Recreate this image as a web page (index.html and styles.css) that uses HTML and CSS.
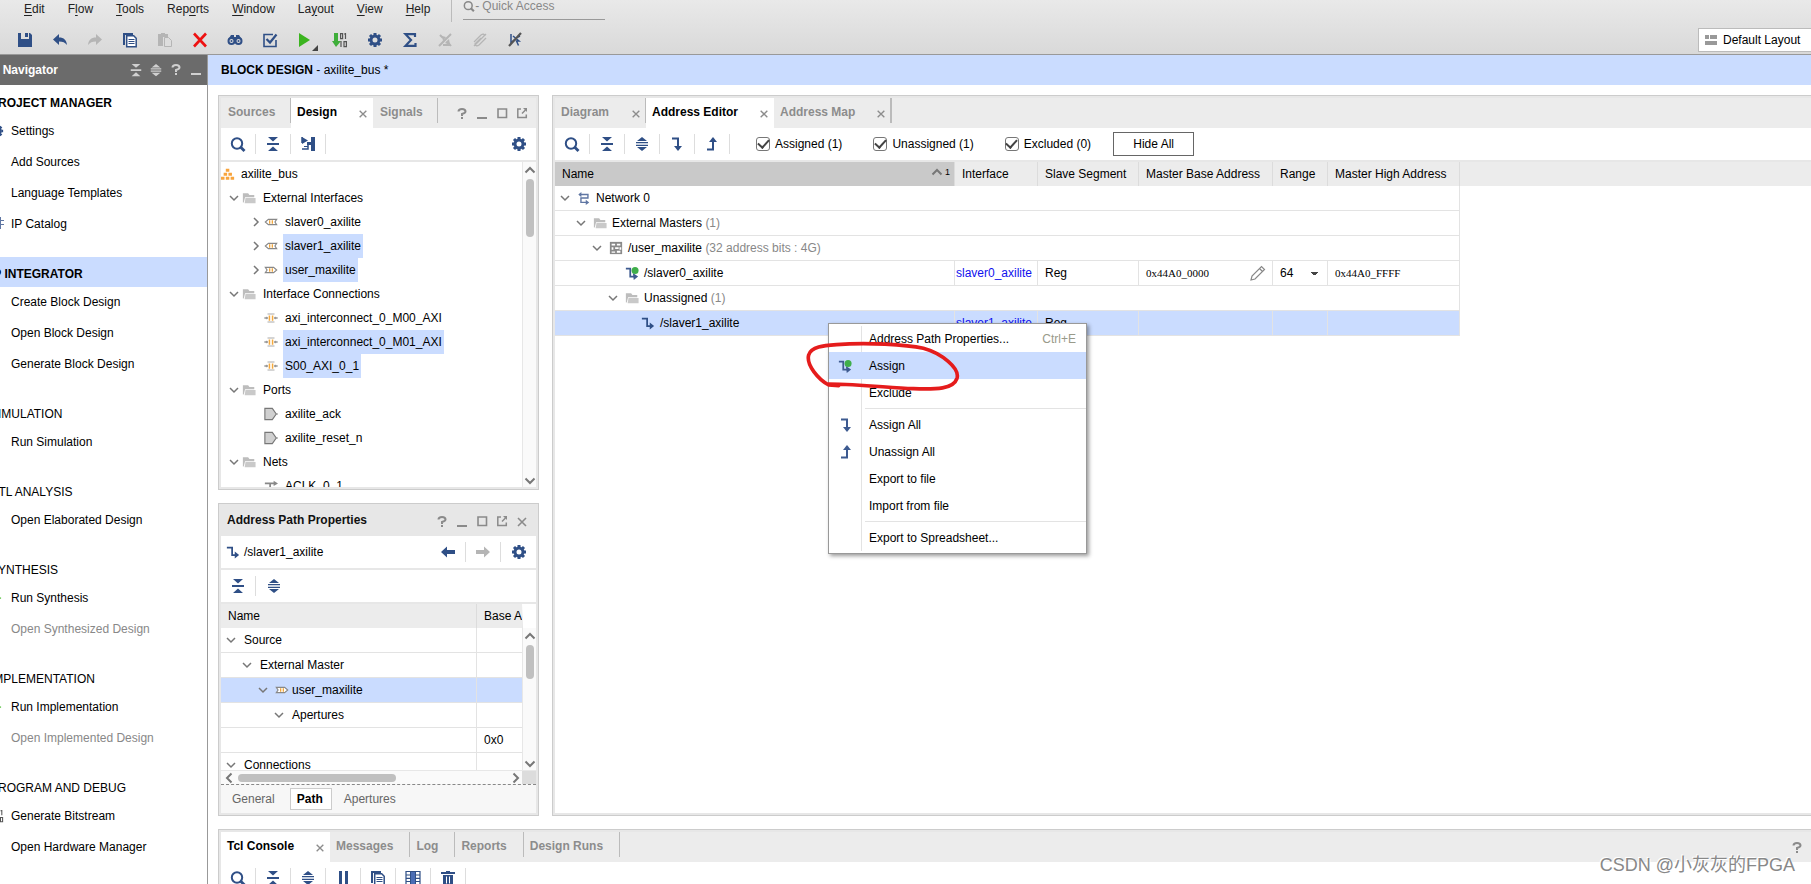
FILE: index.html
```html
<!DOCTYPE html>
<html lang="en">
<head>
<meta charset="utf-8">
<title>Block Design - axilite_bus</title>
<link rel="stylesheet" href="styles.css">
</head>
<body>
<svg class="sprite" aria-hidden="true">
  <symbol id="save" viewBox="0 0 16 16"><path fill="currentColor" d="M1 1h3v6h8V1h1l2 2v12H1zM8 1h3v4H8z"/></symbol>
  <symbol id="undo" viewBox="0 0 16 16"><path fill="currentColor" d="M7 2v3.500c5 0 7.500 2.500 8 7.500-2-2.500-4-3.500-8-3.500V13L1 7.500z"/></symbol>
  <symbol id="redo" viewBox="0 0 16 16"><path fill="currentColor" d="M9 2v3.500C4 5.500 1.500 8 1 13c2-2.500 4-3.500 8-3.500V13l6-5.500z"/></symbol>
  <symbol id="copy" viewBox="0 0 16 16"><path fill="currentColor" d="M1 1h10v2H3v10H1z"/><path fill="#fff" stroke="currentColor" stroke-width="1.500" d="M4.700 3.700h7l2.500 2.500v8.500H4.700z"/><path stroke="currentColor" d="M6.500 7.500h6M6.500 9.500h6M6.500 11.500h6"/></symbol>
  <symbol id="paste" viewBox="0 0 16 16"><path fill="currentColor" d="M1 2h3V1h4v1h3v3H6v9H1z"/><path fill="#ddd" stroke="currentColor" d="M7.500 5.500h4l3 3v6h-7z"/></symbol>
  <symbol id="cross" viewBox="0 0 16 16"><path fill="none" stroke="currentColor" stroke-width="2.600" d="M2 1.500l12 13M14 1.500l-12 13"/></symbol>
  <symbol id="binoc" viewBox="0 0 16 16"><path fill="currentColor" d="M4 3h3v2h2V3h3l2.500 4H1.500z"/><circle cx="4.500" cy="9" r="3" fill="#ddd" stroke="currentColor" stroke-width="2"/><circle cx="11.500" cy="9" r="3" fill="#ddd" stroke="currentColor" stroke-width="2"/><circle cx="4.500" cy="9" r="1" fill="currentColor"/><circle cx="11.500" cy="9" r="1" fill="currentColor"/></symbol>
  <symbol id="validate" viewBox="0 0 16 16"><path fill="none" stroke="currentColor" stroke-width="1.600" d="M11 2.500H2v12h12V8"/><path fill="none" stroke="currentColor" stroke-width="2.200" d="M4.500 7l3.500 3.500 6.500-8"/></symbol>
  <symbol id="play" viewBox="0 0 16 16"><path fill="currentColor" d="M2 1l11 7-11 7z"/></symbol>
  <symbol id="bits" viewBox="0 0 16 16"><path fill="#3fae3a" d="M2 1h4v8h3l-5 6-4-6h2z"/><g fill="none" stroke="#555" stroke-width="1.200"><path d="M8.600 1.600h2v5h-2zM13.500 1v6M12 2h1.500M9 9v6M12 9.600h2.400v5H12z"/></g></symbol>
  <symbol id="gear" viewBox="0 0 16 16"><g fill="none" stroke="currentColor"><circle cx="8" cy="8" r="4" stroke-width="3"/><path stroke-width="3" d="M8 1v2M8 13v2M1 8h2M13 8h2M3 3l1.500 1.500M11.500 11.500L13 13M13 3l-1.500 1.500M4.500 11.500L3 13"/></g></symbol>
  <symbol id="sigma" viewBox="0 0 16 16"><path fill="none" stroke="currentColor" stroke-width="2.200" d="M13 5V2.200H3.500L9 8l-5.500 5.800H13.500V11"/></symbol>
  <symbol id="nodrc" viewBox="0 0 16 16"><path fill="none" stroke="currentColor" stroke-width="2" d="M2 14L14 2M3 3l3 3M10 9l4 5M6 13h7"/><path fill="currentColor" d="M5 4l4 1-3 4zM12 7l1 6-5-2z"/></symbol>
  <symbol id="clip" viewBox="0 0 16 16"><path fill="none" stroke="currentColor" stroke-width="1.300" d="M2 14L14 2M2 10l7-7q3-2 4 1M14 6l-7 7q-3 2-4-1l6-6"/></symbol>
  <symbol id="nocursor" viewBox="0 0 16 16"><path fill="none" stroke="#2f4f86" stroke-width="1.500" d="M4 2v9l3-3M6 4l6 5H9.500l2 4.500M11 5l2-1"/><path stroke="#555" stroke-width="2.200" d="M2 14L14 1"/></symbol>
  <symbol id="collapse" viewBox="0 0 16 16"><path fill="currentColor" d="M3 1h10L8 5.500zM2 7h12v2H2zM3 15h10L8 10.500z"/></symbol>
  <symbol id="expand" viewBox="0 0 16 16"><path fill="currentColor" d="M3 5L8 1l5 4zM2 6h12v1.300H2zM2 8.700h12V10H2zM3 11l5 4 5-4z"/></symbol>
  <symbol id="search" viewBox="0 0 16 16"><circle cx="7" cy="7.500" r="5.200" fill="none" stroke="currentColor" stroke-width="2"/><path stroke="currentColor" stroke-width="2.800" d="M10.500 11l4 4"/></symbol>
  <symbol id="hier" viewBox="0 0 16 16"><path fill="none" stroke="currentColor" stroke-width="1.500" d="M2 1v6M2 13h6V7h4"/><path fill="currentColor" d="M2 1l6 3.500L2 8zM11 1h4v14h-4V9H7V6h4z"/><path stroke="currentColor" d="M4 10.500h4"/></symbol>
  <symbol id="down" viewBox="0 0 16 16"><path fill="none" stroke="currentColor" stroke-width="2" d="M3 2.500h6V11"/><path fill="currentColor" d="M5 10h8l-4 5z"/></symbol>
  <symbol id="up" viewBox="0 0 16 16"><path fill="none" stroke="currentColor" stroke-width="2" d="M3 13.500h6V5"/><path fill="currentColor" d="M5 6h8L9 1z"/></symbol>
  <symbol id="link" viewBox="0 0 16 16"><path fill="none" stroke="currentColor" stroke-width="2" d="M1 3h6v8.500h5"/><path fill="currentColor" d="M10 7.500l5 4-5 4z"/></symbol>
  <symbol id="linked" viewBox="0 0 16 16"><path fill="none" stroke="#3d5a90" stroke-width="2" d="M1 3h5v9h5"/><path fill="#3d5a90" d="M9 8l6 4-5 4z"/><circle cx="11.500" cy="5" r="4" fill="#3fae4a"/></symbol>
  <symbol id="net" viewBox="0 0 16 16"><path fill="none" stroke="#5f76a3" stroke-width="1.600" d="M3 4h9.500v4H4.500v5H11"/><path fill="#5f76a3" d="M5 1v6L1.500 4zM10 10v6l4-3z"/></symbol>
  <symbol id="grid" viewBox="0 0 16 16"><path fill="#8a8a8a" d="M1 1h14v14H1z"/><path fill="#fff" d="M3 3h4v2H3zM9 3h4v2H9zM3 7h2v3H3zM7 7h4v2H7zM12 7h2v3h-2zM3 12h4v1.500H3zM9 11h4v2.500H9z"/></symbol>
  <symbol id="folder" viewBox="0 0 16 16"><path fill="#bdbdbd" d="M1 2.500h6l1.500 2H14V7H3.500L2 13H1z"/><path fill="#c9c9c9" d="M4 8h11.500v6H3z"/></symbol>
  <symbol id="chev" viewBox="0 0 12 12"><path fill="none" stroke="#777" stroke-width="1.500" d="M2 4l4 4 4-4"/></symbol>
  <symbol id="chevr" viewBox="0 0 12 12"><path fill="none" stroke="#777" stroke-width="1.500" d="M4 2l4 4-4 4"/></symbol>
  <symbol id="root" viewBox="0 0 16 16"><path fill="#f8a43c" d="M5.500 2h4v3.500h-4zM3 6.500h4V10H3zM8.500 6.500h4V10h-4zM0 11h4v3.500H0zM5.500 11h4v3.500h-4zM11 11h4v3.500h-4z"/></symbol>
  <symbol id="slave" viewBox="0 0 16 16"><path fill="#fff" stroke="#888" stroke-width="1.300" d="M5 5h9.500l-2 3 2 3H5L1.500 8z"/><path stroke="#f0a030" stroke-width="1.400" d="M6.500 6v4M9.500 6v4"/></symbol>
  <symbol id="master" viewBox="0 0 16 16"><path fill="#fff" stroke="#888" stroke-width="1.300" d="M11 5H1.500l2 3-2 3H11l3.500-3z"/><path stroke="#f0a030" stroke-width="1.400" d="M6.500 6v4M9.500 6v4"/></symbol>
  <symbol id="conn" viewBox="0 0 16 16"><path stroke="#f5a93c" stroke-width="1.700" d="M6.200 5v6M9.800 5v6"/><path stroke="#aaa" stroke-width="1.200" d="M4 3.500h8M4 12.500h8"/><path stroke="#999" stroke-width="1.300" d="M0 8h4M12 8h4"/><circle cx="3" cy="8" r="1.500" fill="#999"/><circle cx="13" cy="8" r="1.500" fill="#999"/></symbol>
  <symbol id="port" viewBox="0 0 16 16"><path fill="#d0d0d0" stroke="#777" stroke-width="1.300" d="M1 1.500h8.500L14 8l-4.500 6.500H1z"/><path stroke="#777" d="M14 8h2"/></symbol>
  <symbol id="wire" viewBox="0 0 16 16"><path fill="none" stroke="#888" stroke-width="2" d="M1 5h11M7 5v10"/><path fill="#888" d="M11 2l5 3-5 3z"/></symbol>
  <symbol id="left" viewBox="0 0 16 16"><path fill="currentColor" d="M7 2.500v3.500h8v4H7v3.500L1 8z"/></symbol>
  <symbol id="right" viewBox="0 0 16 16"><path fill="currentColor" d="M9 2.500v3.500H1v4h8v3.500L15 8z"/></symbol>
  <symbol id="help" viewBox="0 0 12 12"><path fill="none" stroke="currentColor" stroke-width="2" d="M2.500 3.500q0-2.500 3.500-2.500t3.500 2.500Q9.500 5 6 6V8"/><path fill="currentColor" d="M5 9h2v2H5z"/></symbol>
  <symbol id="min" viewBox="0 0 12 12"><path fill="currentColor" d="M1 9h10v2H1z"/></symbol>
  <symbol id="max" viewBox="0 0 12 12"><path fill="none" stroke="currentColor" stroke-width="1.600" d="M2 1h8.500v8.500H2z"/></symbol>
  <symbol id="pop" viewBox="0 0 12 12"><path fill="none" stroke="currentColor" stroke-width="1.500" d="M5 1H1.800v8.500h8.500V6.500M6 5.500L9.500 2"/><path fill="currentColor" d="M7 0h4v4z"/></symbol>
  <symbol id="x" viewBox="0 0 12 12"><path fill="none" stroke="currentColor" stroke-width="1.600" d="M2 2l8 8M10 2l-8 8"/></symbol>
  <symbol id="pencil" viewBox="0 0 16 16"><path fill="none" stroke="#888" stroke-width="1.200" d="M1 15l1-4L11.500 1.500l3 3L5 14zM9.500 3.500l3 3"/></symbol>
  <symbol id="layout" viewBox="0 0 12 12"><path fill="#999" d="M0 1h4v4H0zM5 1h7v4H5zM0 7h12v4H0z"/></symbol>
  <symbol id="pause" viewBox="0 0 16 16"><path fill="currentColor" d="M4 1h3v15H4zM10 1h3v15h-3z"/></symbol>
  <symbol id="table" viewBox="0 0 16 16"><path fill="none" stroke="currentColor" stroke-width="1.200" d="M1 1.500h14v13H1zM1 5h14M1 8.300h14M1 11.500h14"/><path fill="#4a6db5" stroke="currentColor" d="M5.500 1.500h5v13h-5z"/></symbol>
  <symbol id="trash" viewBox="0 0 16 16"><path fill="currentColor" d="M6 1h4v1h5v2H1V2h5zM3 5h10v10.500H3z"/><path stroke="#fff" d="M6.500 6.500v7M9.500 6.500v7"/></symbol>
</svg>

<header class="top">
  <nav class="menubar" aria-label="Main menu">
    <button><u>E</u>dit</button><button>F<u>l</u>ow</button><button><u>T</u>ools</button><button>Rep<u>o</u>rts</button><button><u>W</u>indow</button><button>La<u>y</u>out</button><button><u>V</u>iew</button><button><u>H</u>elp</button>
    <label class="quick"><svg class="i12"><use href="#search"/></svg><span class="dash">-</span><input type="text" placeholder="Quick Access" aria-label="Quick Access"></label>
  </nav>
  <div class="toolbar main-tools">
    <button aria-label="Save"><svg><use href="#save"/></svg></button>
    <button aria-label="Undo"><svg><use href="#undo"/></svg></button>
    <button aria-label="Redo" disabled><svg><use href="#redo"/></svg></button>
    <button aria-label="Copy"><svg><use href="#copy"/></svg></button>
    <button aria-label="Paste" disabled><svg><use href="#paste"/></svg></button>
    <button class="red" aria-label="Delete"><svg><use href="#cross"/></svg></button>
    <button aria-label="Find"><svg><use href="#binoc"/></svg></button>
    <button aria-label="Validate"><svg><use href="#validate"/></svg></button>
    <button class="green more" aria-label="Run"><svg><use href="#play"/></svg></button>
    <button aria-label="Bitstream"><svg><use href="#bits"/></svg></button>
    <button aria-label="Settings"><svg><use href="#gear"/></svg></button>
    <button aria-label="Summary"><svg><use href="#sigma"/></svg></button>
    <button aria-label="Rules" disabled><svg><use href="#nodrc"/></svg></button>
    <button aria-label="Attach" disabled><svg><use href="#clip"/></svg></button>
    <button aria-label="Cancel selection"><svg><use href="#nocursor"/></svg></button>
    <button class="layout-btn"><svg class="i12"><use href="#layout"/></svg>Default Layout</button>
  </div>
</header>

<div class="body">
  <aside class="flow">
    <div class="flow-title"><h2>Flow Navigator</h2>
      <button aria-label="Collapse"><svg class="i14"><use href="#collapse"/></svg></button><button aria-label="Expand"><svg class="i14"><use href="#expand"/></svg></button><button aria-label="Help"><svg class="i12"><use href="#help"/></svg></button><button aria-label="Minimize"><svg class="i12"><use href="#min"/></svg></button>
    </div>
    <nav class="flow-list">
      <section><h3 class="b">PROJECT MANAGER</h3>
        <button><svg class="i14 blue"><use href="#gear"/></svg>Settings</button>
        <button><i class="i14"></i>Add Sources</button>
        <button><i class="i14"></i>Language Templates</button>
        <button><svg class="i14" viewBox="0 0 14 14"><path stroke="#5f76a3" d="M2 3.500h12M2 7.500h12M6.500 0v12M10.500 0v12"/></svg>IP Catalog</button></section>
      <section><h3 class="b on">IP INTEGRATOR</h3>
        <button><i class="i14"></i>Create Block Design</button>
        <button><i class="i14"></i>Open Block Design</button>
        <button><i class="i14"></i>Generate Block Design</button></section>
      <section><h3>SIMULATION</h3>
        <button><i class="i14"></i>Run Simulation</button></section>
      <section><h3>RTL ANALYSIS</h3>
        <button><i class="i14"></i>Open Elaborated Design</button></section>
      <section><h3>SYNTHESIS</h3>
        <button><svg class="i14 green"><use href="#play"/></svg>Run Synthesis</button>
        <button disabled><i class="i14"></i>Open Synthesized Design</button></section>
      <section><h3>IMPLEMENTATION</h3>
        <button><svg class="i14 green"><use href="#play"/></svg>Run Implementation</button>
        <button disabled><i class="i14"></i>Open Implemented Design</button></section>
      <section><h3>PROGRAM AND DEBUG</h3>
        <button><svg class="i14"><use href="#bits"/></svg>Generate Bitstream</button>
        <button><i class="i14"></i>Open Hardware Manager</button></section>
    </nav>
  </aside>

  <main class="work">
    <h1 class="work-title"><b>BLOCK DESIGN</b> - axilite_bus *</h1>
    <div class="upper">
      <div class="side">
        <section class="panel design">
          <div class="tabs">
            <button class="tab t-src">Sources</button>
            <div class="tab on t-des"><button>Design</button><button class="close" aria-label="Close"><svg class="i10"><use href="#x"/></svg></button></div>
            <button class="tab t-sig">Signals</button>
            <div class="win"><button aria-label="Help"><svg class="i12"><use href="#help"/></svg></button><button aria-label="Minimize"><svg class="i12"><use href="#min"/></svg></button><button aria-label="Maximize"><svg class="i12"><use href="#max"/></svg></button><button aria-label="Float"><svg class="i12"><use href="#pop"/></svg></button></div>
          </div>
          <div class="toolbar sub">
            <button aria-label="Search"><svg><use href="#search"/></svg></button><button aria-label="Collapse"><svg><use href="#collapse"/></svg></button><button aria-label="Hierarchy"><svg><use href="#hier"/></svg></button>
            <button class="end" aria-label="Settings"><svg><use href="#gear"/></svg></button>
          </div>
          <div class="scroller">
            <ul class="tree">
              <li class="l0"><svg class="i14"><use href="#root"/></svg><span>axilite_bus</span></li>
              <li class="l1"><svg class="i12"><use href="#chev"/></svg><svg class="i14"><use href="#folder"/></svg><span>External Interfaces</span></li>
              <li class="l2"><svg class="i12"><use href="#chevr"/></svg><svg class="i14"><use href="#slave"/></svg><span>slaver0_axilite</span></li>
              <li class="l2"><svg class="i12"><use href="#chevr"/></svg><svg class="i14"><use href="#slave"/></svg><span class="sel">slaver1_axilite</span></li>
              <li class="l2"><svg class="i12"><use href="#chevr"/></svg><svg class="i14"><use href="#master"/></svg><span class="sel">user_maxilite</span></li>
              <li class="l1"><svg class="i12"><use href="#chev"/></svg><svg class="i14"><use href="#folder"/></svg><span>Interface Connections</span></li>
              <li class="l2"><i class="i12"></i><svg class="i14"><use href="#conn"/></svg><span>axi_interconnect_0_M00_AXI</span></li>
              <li class="l2"><i class="i12"></i><svg class="i14"><use href="#conn"/></svg><span class="sel">axi_interconnect_0_M01_AXI</span></li>
              <li class="l2"><i class="i12"></i><svg class="i14"><use href="#conn"/></svg><span class="sel">S00_AXI_0_1</span></li>
              <li class="l1"><svg class="i12"><use href="#chev"/></svg><svg class="i14"><use href="#folder"/></svg><span>Ports</span></li>
              <li class="l2"><i class="i12"></i><svg class="i14"><use href="#port"/></svg><span>axilite_ack</span></li>
              <li class="l2"><i class="i12"></i><svg class="i14"><use href="#port"/></svg><span>axilite_reset_n</span></li>
              <li class="l1"><svg class="i12"><use href="#chev"/></svg><svg class="i14"><use href="#folder"/></svg><span>Nets</span></li>
              <li class="l2"><i class="i12"></i><svg class="i14"><use href="#wire"/></svg><span>ACLK_0_1</span></li>
            </ul>
            <div class="vbar"><svg class="i12" viewBox="0 0 12 12"><path d="M1.500 8.500L6 4l4.500 4.500"/></svg><div class="thumb tall"></div><svg class="i12 last" viewBox="0 0 12 12"><path d="M1.500 3.500L6 8l4.500-4.500"/></svg></div>
          </div>
        </section>

        <section class="panel props">
          <div class="tabs plain"><h2>Address Path Properties</h2>
            <div class="win"><button aria-label="Help"><svg class="i12"><use href="#help"/></svg></button><button aria-label="Minimize"><svg class="i12"><use href="#min"/></svg></button><button aria-label="Maximize"><svg class="i12"><use href="#max"/></svg></button><button aria-label="Float"><svg class="i12"><use href="#pop"/></svg></button><button aria-label="Close"><svg class="i12"><use href="#x"/></svg></button></div>
          </div>
          <div class="toolbar sub path"><svg class="i14 blue"><use href="#link"/></svg><span>/slaver1_axilite</span>
            <button class="end" aria-label="Back"><svg><use href="#left"/></svg></button><button aria-label="Forward" disabled><svg><use href="#right"/></svg></button><button class="nosep" aria-label="Settings"><svg><use href="#gear"/></svg></button>
          </div>
          <div class="toolbar sub"><button aria-label="Collapse"><svg><use href="#collapse"/></svg></button><button class="nosep" aria-label="Expand"><svg><use href="#expand"/></svg></button></div>
          <div class="scroller props-scroll">
            <table class="grid pgrid">
              <thead><tr><th class="c-pname">Name</th><th>Base A</th></tr></thead>
              <tbody>
                <tr><td><div class="cell"><svg class="i12"><use href="#chev"/></svg><span>Source</span></div></td><td></td></tr>
                <tr><td><div class="cell d1"><svg class="i12"><use href="#chev"/></svg><span>External Master</span></div></td><td></td></tr>
                <tr class="hot"><td><div class="cell d2"><svg class="i12"><use href="#chev"/></svg><svg class="i14"><use href="#master"/></svg><span>user_maxilite</span></div></td><td></td></tr>
                <tr><td><div class="cell d3"><svg class="i12"><use href="#chev"/></svg><span>Apertures</span></div></td><td></td></tr>
                <tr><td></td><td>0x0</td></tr>
                <tr><td><div class="cell"><svg class="i12"><use href="#chev"/></svg><span>Connections</span></div></td><td></td></tr>
              </tbody>
            </table>
            <div class="vbar"><svg class="i12" viewBox="0 0 12 12"><path d="M1.500 8.500L6 4l4.500 4.500"/></svg><div class="thumb"></div><svg class="i12 last" viewBox="0 0 12 12"><path d="M1.500 3.500L6 8l4.500-4.500"/></svg></div>
          </div>
          <div class="hbar"><svg class="i12" viewBox="0 0 12 12"><path d="M8.500 1.500L4 6l4.500 4.500"/></svg><div class="hthumb"></div><svg class="i12 last" viewBox="0 0 12 12"><path d="M3.500 1.500L8 6l-4.500 4.500"/></svg><i class="corner"></i></div>
          <div class="bottom-tabs"><button>General</button><button class="on">Path</button><button>Apertures</button></div>
        </section>
      </div>

      <section class="panel editor">
        <div class="tabs">
          <div class="tab t-dia"><button>Diagram</button><button class="close" aria-label="Close"><svg class="i10"><use href="#x"/></svg></button></div>
          <div class="tab on t-edit"><button>Address Editor</button><button class="close" aria-label="Close"><svg class="i10"><use href="#x"/></svg></button></div>
          <div class="tab t-map"><button>Address Map</button><button class="close" aria-label="Close"><svg class="i10"><use href="#x"/></svg></button></div>
        </div>
        <div class="toolbar sub">
          <button aria-label="Search"><svg><use href="#search"/></svg></button><button aria-label="Collapse"><svg><use href="#collapse"/></svg></button><button aria-label="Expand"><svg><use href="#expand"/></svg></button><button aria-label="Assign all"><svg><use href="#down"/></svg></button><button aria-label="Unassign all"><svg><use href="#up"/></svg></button>
          <div class="filters"><label><input type="checkbox" checked>Assigned (1)</label><label><input type="checkbox" checked>Unassigned (1)</label><label><input type="checkbox" checked>Excluded (0)</label><button class="hide">Hide All</button></div>
        </div>
        <table class="grid agrid">
          <thead><tr><th class="c-name"><div class="sorted">Name<svg class="i12" viewBox="0 0 12 12"><path d="M1.500 8.500L6 4l4.500 4.500"/></svg><small>1</small></div></th><th class="c-if">Interface</th><th class="c-seg">Slave Segment</th><th class="c-base">Master Base Address</th><th class="c-range">Range</th><th class="c-high">Master High Address</th><th class="fill"></th></tr></thead>
          <tbody>
            <tr><td colspan="6"><div class="cell"><svg class="i12"><use href="#chev"/></svg><svg class="i14"><use href="#net"/></svg><span>Network 0</span></div></td><td class="fill"></td></tr>
            <tr><td colspan="6"><div class="cell d1"><svg class="i12"><use href="#chev"/></svg><svg class="i14"><use href="#folder"/></svg><span>External Masters <em>(1)</em></span></div></td><td class="fill"></td></tr>
            <tr><td colspan="6"><div class="cell d2"><svg class="i12"><use href="#chev"/></svg><svg class="i14"><use href="#grid"/></svg><span>/user_maxilite <em>(32 address bits : 4G)</em></span></div></td><td class="fill"></td></tr>
            <tr><td><div class="cell d3"><i class="i12"></i><svg class="i14"><use href="#linked"/></svg><span>/slaver0_axilite</span></div></td><td class="lnk"><a href="#if0">slaver0_axilite</a></td><td>Reg</td><td><div class="hexcell"><span class="hex">0x44A0_0000</span><button aria-label="Edit"><svg><use href="#pencil"/></svg></button></div></td><td><select aria-label="Range"><option>64</option></select></td><td><span class="hex">0x44A0_FFFF</span></td><td class="fill"></td></tr>
            <tr><td colspan="6"><div class="cell d3"><svg class="i12"><use href="#chev"/></svg><svg class="i14"><use href="#folder"/></svg><span>Unassigned <em>(1)</em></span></div></td><td class="fill"></td></tr>
            <tr class="hot"><td><div class="cell d4"><i class="i12"></i><svg class="i14 blue"><use href="#link"/></svg><span>/slaver1_axilite</span></div></td><td class="lnk"><a href="#if1">slaver1_axilite</a></td><td>Reg</td><td></td><td></td><td></td><td class="fill"></td></tr>
          </tbody>
        </table>
      </section>
    </div>

    <section class="panel console">
      <div class="tabs">
        <div class="tab on t-tcl"><button>Tcl Console</button><button class="close" aria-label="Close"><svg class="i10"><use href="#x"/></svg></button></div>
        <button class="tab bar">Messages</button><button class="tab bar">Log</button><button class="tab bar">Reports</button><button class="tab bar">Design Runs</button>
        <div class="win"><button aria-label="Help"><svg class="i12"><use href="#help"/></svg></button></div>
      </div>
      <div class="toolbar sub"><button aria-label="Search"><svg><use href="#search"/></svg></button><button aria-label="Collapse"><svg><use href="#collapse"/></svg></button><button aria-label="Expand"><svg><use href="#expand"/></svg></button><button aria-label="Pause"><svg><use href="#pause"/></svg></button><button aria-label="Copy"><svg><use href="#copy"/></svg></button><button aria-label="Columns"><svg><use href="#table"/></svg></button><button aria-label="Clear"><svg><use href="#trash"/></svg></button></div>
    </section>

    <div class="context" role="menu">
      <button role="menuitem"><i></i><span>Address Path Properties...</span><kbd>Ctrl+E</kbd></button>
      <button role="menuitem" class="hot"><i><svg class="i14"><use href="#linked"/></svg></i><span>Assign</span></button>
      <button role="menuitem"><i></i><span>Exclude</span></button>
      <hr>
      <button role="menuitem"><i><svg><use href="#down"/></svg></i><span>Assign All</span></button>
      <button role="menuitem"><i><svg><use href="#up"/></svg></i><span>Unassign All</span></button>
      <button role="menuitem"><i></i><span>Export to file</span></button>
      <button role="menuitem"><i></i><span>Import from file</span></button>
      <hr>
      <button role="menuitem"><i></i><span>Export to Spreadsheet...</span></button>
    </div>
    <svg class="scribble" viewBox="0 0 480 252" aria-hidden="true"><path d="M116 227L86 225C55 208 18 165 26 135C34 110 70 107 110 104C200 96 320 104 370 115C425 130 480 175 471 205C460 238 410 238 340 236C270 234 190 223 86 222"/></svg>
    <p class="mark">CSDN @小灰灰的FPGA</p>
  </main>
</div>
</body>
</html>
```
FILE: styles.css
```css
* { box-sizing: border-box; }
body {
  margin: 0;
  height: 100vh;
  overflow: hidden;
  display: flex;
  flex-direction: column;
  font: 12px/16px "Liberation Sans", Arial, sans-serif;
  color: #000;
  background: #fff;
}
h1, h2, h3, p, ul { margin: 0; padding: 0; font-size: 12px; font-weight: normal; }
button, input, select { font: inherit; color: inherit; border: 0; background: none; padding: 0; margin: 0; }
button { white-space: nowrap; }
svg { width: 16px; height: 16px; display: block; flex: none; }
i { flex: none; }
.sprite { position: absolute; width: 0; height: 0; }
.i10 { width: 10px; height: 10px; }
.i12 { width: 12px; height: 12px; }
.i14 { width: 14px; height: 14px; }
.blue { color: #2f4f86; }
.green, .toolbar .green { color: #3bb41f; }
.toolbar .red { color: #ee1111; }

/* top bars */
.top { flex: none; background: linear-gradient(#e9e9e9, #d9d9d9); border-bottom: 1px solid #999; }
.menubar { display: flex; gap: 1px; height: 26px; padding-left: 13px; color: #222; }
.menubar > button { padding: 0 11px; height: 17px; }
.menubar u { text-underline-offset: 2px; }
.quick { display: flex; align-items: center; height: 20px; width: 142px; margin-left: 21px; padding-bottom: 7px; border-bottom: 1px solid #999; color: #888; position: relative; }
.quick::before { content: ""; position: absolute; left: -12px; top: 0; width: 1px; height: 22px; background: #bbb; }
.quick input { width: 100%; min-width: 0; outline: 0; }
.quick input::placeholder { color: #888; opacity: 1; }
.dash { padding-right: 3px; }
.toolbar { display: flex; align-items: center; color: #2f4f86; }
.toolbar button { width: 35px; flex: none; display: flex; justify-content: center; align-items: center; }
.toolbar button:disabled { color: #b5b5b5; }
.main-tools { height: 28px; padding-left: 7px; }
.more { position: relative; }
.more::after { content: ""; position: absolute; right: 4px; bottom: -3px; border: 3px solid; border-color: transparent #444 #444 transparent; }
.toolbar .layout-btn { margin-left: auto; width: 113px; height: 24px; gap: 6px; justify-content: flex-start; padding-left: 6px; color: #000; background: #fff; border: 1px solid #bbb; border-right: 0; }

.body { flex: 1; display: flex; min-height: 0; }

/* flow navigator */
.flow { width: 208px; flex: none; border-right: 1px solid #999; overflow: hidden; }
.flow-title { display: flex; align-items: center; height: 30px; background: #6b6b6b; color: #d0d0d0; gap: 7px; padding-right: 5px; }
.flow-title h2 { font-weight: bold; color: #fff; margin: 0 auto 0 -28px; white-space: nowrap; }
.flow-title button { width: 13px; display: flex; justify-content: center; }
.flow-list { margin-left: -30px; padding-top: 1px; }
.flow-list section { padding-bottom: 17px; }
.flow-list h3 { height: 30px; padding: 9px 0 0 20px; }
.flow-list .b { font-weight: bold; }
.flow-list .on { background: #cadcff; }
.flow-list button { display: flex; align-items: center; gap: 7px; height: 31px; width: 100%; padding: 0 0 1px 20px; }
.flow-list button:disabled { color: #888; }

/* workspace */
.work { flex: 1; min-width: 0; display: flex; flex-direction: column; position: relative; }
.work-title { height: 30px; flex: none; padding: 7px 13px; background: #cadcff; }
.upper { flex: 1; min-height: 0; display: flex; gap: 13px; padding: 10px 0 13px 10px; }
.side { width: 321px; flex: none; display: flex; flex-direction: column; gap: 13px; min-height: 0; }
.panel { border: 1px solid #ccc; padding: 2px; background: #e7e7e7; display: flex; flex-direction: column; min-height: 0; }
.design { flex: 1; }
.props { flex: none; }
.editor { flex: 1; min-width: 0; background: #fff; border-right: 0; padding-right: 0; box-shadow: inset 2px 2px #e7e7e7, inset 0 -2px #e7e7e7; }
.editor .sub { margin-bottom: 0; height: 34px; border-bottom: 2px solid #e7e7e7; }
.console { flex: none; height: 55px; margin-left: 10px; overflow: hidden; border-right: 0; border-bottom: 0; padding-bottom: 0; padding-right: 0; }

.tabs { display: flex; height: 30px; flex: none; background: #ececec; color: #8c8c8c; font-weight: bold; }
.tabs.plain { background: #e7e7e7; }
.tabs h2 { font-weight: bold; color: #111; padding: 6px; }
.tab { display: flex; align-items: flex-start; justify-content: space-between; padding: 6px 7px 0; position: relative; height: 30px; }
.tab.on { background: #fff; color: #000; }
.close { padding-top: 5px; color: #8c8c8c; }
.t-src { width: 70px; }
.t-des { width: 82px; padding: 6px 5px 0 6px; }
.t-sig { width: 65px; }
.t-dia { width: 91px; padding: 6px 5px 0 6px; }
.t-edit { width: 128px; padding: 6px 5px 0 6px; }
.t-map { width: 118px; padding: 6px 6px 0 6px; }
.t-tcl { width: 109px; padding: 6px 5px 0 6px; }
.tab.bar { padding: 6px 17px 0 6px; }
.t-src::after, .t-sig::after, .t-dia::after, .t-map::after, .bar::after { content: ""; position: absolute; right: 0; top: 0; width: 1px; height: 25px; background: #bbb; }
.t-map::after { width: 2px; }
.win { display: flex; gap: 8px; margin-left: auto; padding: 10px 8px 0 0; color: #8a8a8a; align-items: flex-start; }

.sub { height: 32px; flex: none; background: #fff; margin-bottom: 2px; }
.sub > button { height: 20px; border-right: 1px solid #ddd; }
.sub > .end { margin-left: auto; border-right: 0; }
.sub > .nosep { border-right: 0; }
.path { padding-left: 5px; gap: 0; }
.path span { color: #000; padding-left: 4px; }
.path > .end { border-right: 1px solid #ddd; }

.scroller { display: flex; flex: 1; min-height: 0; background: #fff; overflow: hidden; }
.tree { list-style: none; flex: 1; }
.tree li { display: flex; align-items: center; height: 24px; }
.tree span { line-height: 24px; margin-left: 5px; padding: 0 2px; }
.tree .l0 span { margin-left: 4px; }
.tree .i12 { margin-right: 2px; }
.l1 { padding-left: 7px; }
.l2 { padding-left: 29px; }
.sel, .hot { background: #cadcff; }
.vbar { width: 14px; flex: none; display: flex; flex-direction: column; align-items: center; border-left: 1px solid #e7e7e7; background: #fafafa; padding-top: 2px; }
.vbar path, .hbar path, .sorted path { fill: none; stroke: #777; stroke-width: 2; }
.thumb { width: 8px; height: 34px; border-radius: 4px; background: #c0c0c0; margin-top: 3px; }
.thumb.tall { height: 58px; }
.last { margin-top: auto; }

.grid { border-collapse: separate; border-spacing: 0; table-layout: fixed; }
.grid th { height: 24px; padding: 0 0 0 7px; font-weight: normal; text-align: left; background: #ececec; border-right: 1px solid #dcdcdc; white-space: nowrap; overflow: hidden; }
.grid td { height: 25px; padding: 0 0 0 7px; border: solid #e3e3e3; border-width: 0 1px 1px 0; white-space: nowrap; overflow: hidden; }
.cell { display: flex; align-items: center; margin-left: -3px; }
.cell .i14 { margin-left: 6px; }
.d1 { padding-left: 16px; }
.d2 { padding-left: 32px; }
.d3 { padding-left: 48px; }
.d4 { padding-left: 64px; }
.cell span { padding-left: 5px; }
.cell em { font-style: normal; color: #888; }

.props-scroll { flex: none; height: 166px; }
.pgrid { flex: 1; }
.pgrid .c-pname { width: 256px; }
.pgrid .cell span { padding-left: 7px; }
.pgrid .cell .i14 + span { padding-left: 3px; }
.pgrid th:last-child, .pgrid td:last-child { border-right: 0; }
.props-scroll .vbar { border-top: 24px solid #fff; }
.hbar { display: flex; align-items: center; height: 14px; background: #fafafa; border-top: 1px solid #e7e7e7; padding-left: 2px; }
.hthumb { width: 158px; height: 8px; border-radius: 4px; background: #c0c0c0; margin-left: 3px; }
.hbar .last { margin: 0 0 0 auto; }
.corner { width: 14px; height: 13px; background: #dcdcdc; }
.bottom-tabs { display: flex; height: 29px; background: #f7f7f7; border-top: 1px dashed #888; padding: 3px 0 3px 0; color: #666; }
.bottom-tabs button { padding: 0 10px 0 11px; }
.bottom-tabs .on { margin: 0 1px 0 5px; padding: 0 8px 0 6px; border: 1px solid #ccc; background: #fff; color: #000; font-weight: bold; height: 22px; }

.filters { display: flex; align-items: center; color: #000; padding-left: 26px; }
.filters label { display: flex; align-items: center; gap: 5px; margin-right: 31px; }
.filters input { appearance: none; width: 14px; height: 14px; border: 1px solid #777; border-radius: 3px; display: grid; place-content: center; }
.filters input::after { content: ""; width: 9px; height: 5px; border: solid #444; border-width: 0 0 2px 2px; rotate: -48deg; margin-bottom: 3px; }
.filters .hide { width: 81px; height: 24px; border: 1px solid #666; margin-left: -9px; }
.agrid { width: 100%; }
.c-name { width: 400px; }
.agrid .c-name { background: #c9c9c9; }
.c-if { width: 83px; }
.c-seg { width: 101px; }
.c-base { width: 134px; }
.c-range { width: 55px; }
.c-high { width: 132px; }
.agrid th.fill { border-right: 0; }
.agrid td.fill { border: 0; background: #fff; }
.sorted { display: flex; align-items: center; }
.sorted svg { margin: 0 2px 4px auto; }
.sorted small { font-size: 9px; margin: 0 4px 4px 0; }
.grid .lnk { padding-left: 1px; }
.lnk a { color: #1010ee; text-decoration: none; }
.hex { font-family: "Liberation Serif", "Times New Roman", serif; font-size: 11px; }
.hexcell { display: flex; align-items: center; justify-content: space-between; padding-right: 6px; }
.agrid select { appearance: none; width: 41px; height: 20px; background: linear-gradient(#444, #444) no-repeat 31px 9px / 7px 1px, linear-gradient(#444, #444) no-repeat 32px 10px / 5px 1px, linear-gradient(#444, #444) no-repeat 33px 11px / 3px 1px; display: block; }

/* overlays */
.context { position: absolute; left: 620px; top: 268px; width: 259px; padding: 1px 0 2px; background: #fff; border: 1px solid #999; box-shadow: 2px 2px 4px #0006; display: flex; flex-direction: column; }
.context::before { content: ""; position: absolute; left: 32px; top: 2px; bottom: 2px; width: 1px; background: #e3e3e3; }
.context button { display: flex; align-items: center; height: 27px; text-align: left; position: relative; }
.context button i { width: 40px; display: flex; padding-left: 9px; }
.context svg { color: #3d5a90; }
.context kbd { font: inherit; color: #999a8a; margin-left: auto; padding-right: 10px; }
.context hr { border: 0; border-top: 1px solid #e3e3e3; margin: 2px 0 2px 36px; width: auto; }
.scribble { position: absolute; left: 592px; top: 255px; width: 160px; height: 84px; pointer-events: none; }
.scribble path { fill: none; stroke: #e51c1c; stroke-width: 11; stroke-linecap: round; stroke-linejoin: round; }
.mark { position: absolute; right: 16px; bottom: 6px; font: 18px/26px "Liberation Sans", "Noto Sans CJK SC", sans-serif; color: #888; text-shadow: 1px 1px 0 #fff, -1px -1px 0 #fff; }
```
